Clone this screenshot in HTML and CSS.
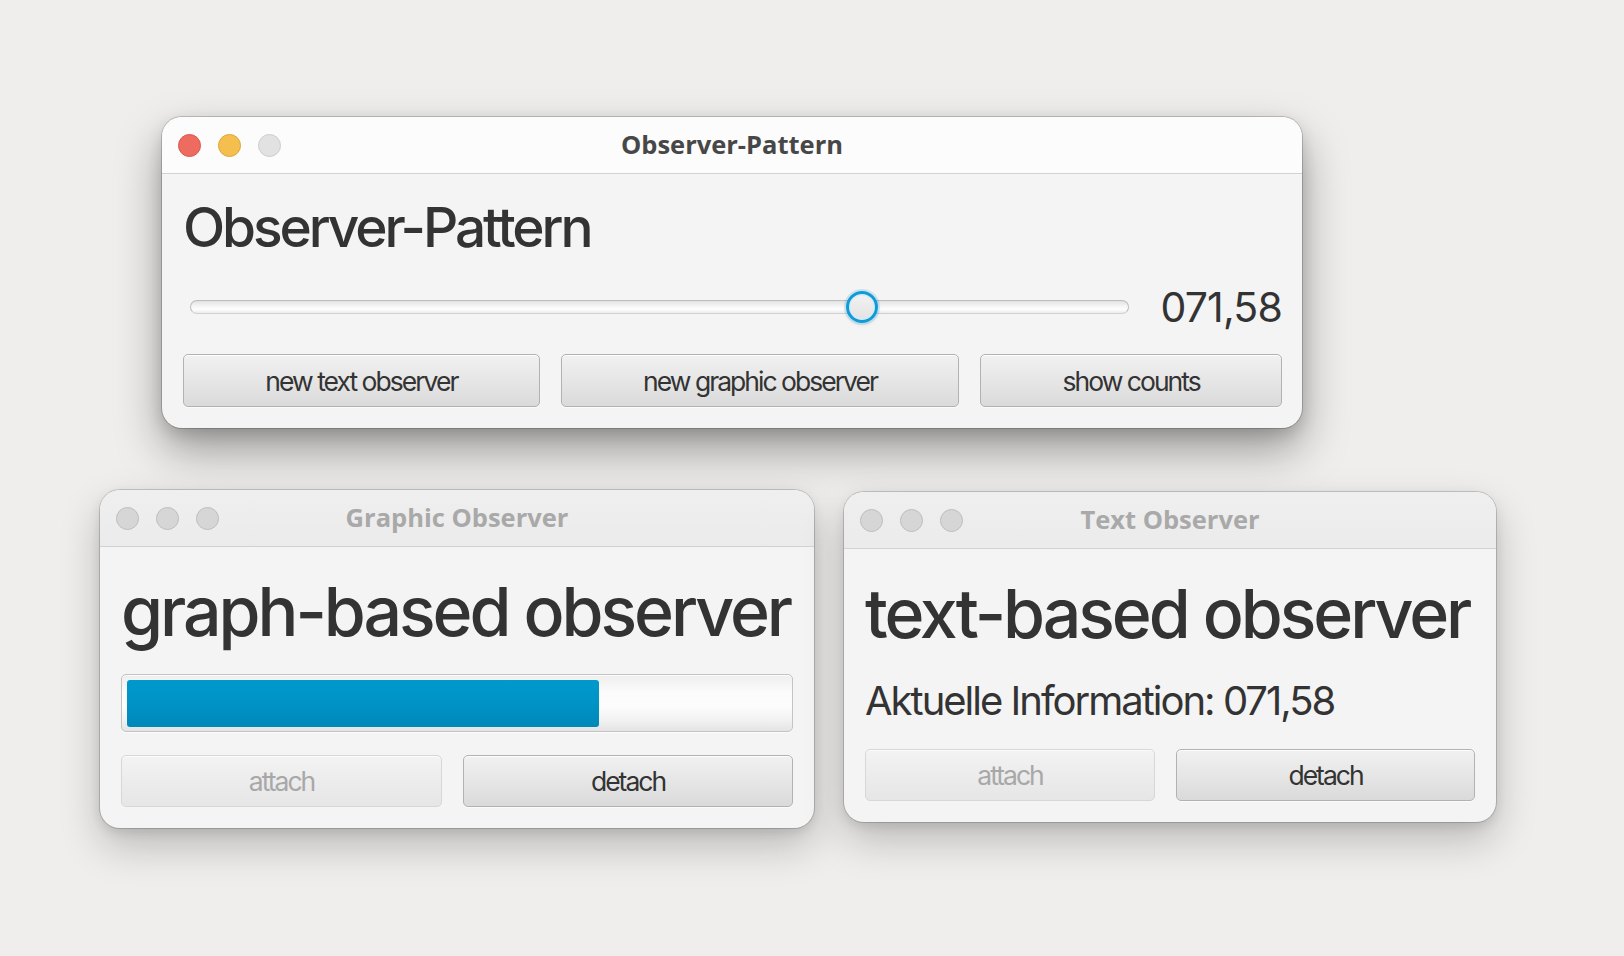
FILE: index.html
```html
<!DOCTYPE html>
<html lang="de">
<head>
<meta charset="utf-8">
<title>Observer-Pattern</title>
<link rel="stylesheet" href="styles.css">
</head>
<body>
<div class="desk">

  <section class="window win-main active">
    <header class="titlebar">
      <div class="lights">
        <span class="light red"></span>
        <span class="light yellow"></span>
        <span class="light zoom"></span>
      </div>
      <div class="wtitle">Observer-Pattern</div>
      <div></div>
    </header>
    <div class="content main-content">
      <h1 class="heading">Observer-Pattern</h1>
      <div class="slider-row">
        <div class="slider">
          <div class="track">
            <div class="thumb" style="left: 71.58%"></div>
          </div>
        </div>
        <div class="value">071,58</div>
      </div>
      <div class="btn-row">
        <button class="btn">new text observer</button>
        <button class="btn">new graphic observer</button>
        <button class="btn">show counts</button>
      </div>
    </div>
  </section>

  <section class="window win-graphic">
    <header class="titlebar">
      <div class="lights">
        <span class="light"></span>
        <span class="light"></span>
        <span class="light"></span>
      </div>
      <div class="wtitle">Graphic Observer</div>
      <div></div>
    </header>
    <div class="content">
      <div class="big">graph-based observer</div>
      <div class="progress">
        <div class="bar" style="width: 71.58%"></div>
      </div>
      <div class="btn-row small-gap">
        <button class="btn" disabled>attach</button>
        <button class="btn">detach</button>
      </div>
    </div>
  </section>

  <section class="window win-text">
    <header class="titlebar">
      <div class="lights">
        <span class="light"></span>
        <span class="light"></span>
        <span class="light"></span>
      </div>
      <div class="wtitle">Text Observer</div>
      <div></div>
    </header>
    <div class="content">
      <div class="big">text-based observer</div>
      <div class="info">Aktuelle Information: 071,58</div>
      <div class="btn-row info-gap">
        <button class="btn" disabled>attach</button>
        <button class="btn">detach</button>
      </div>
    </div>
  </section>

</div>
</body>
</html>
```

FILE: styles.css
```css
* { box-sizing: border-box; }

html, body {
  margin: 0;
  padding: 0;
}

body {
  background: #efeeec;
  font-family: "Inter", "Liberation Sans", sans-serif;
  color: #333333;
}

.desk {
  position: relative;
  width: 1624px;
  height: 956px;
  overflow: hidden;
  background: #efeeec;
}

/* ---------- windows ---------- */
.window {
  position: absolute;
  background: #f4f4f4;
  border-radius: 20px;
  overflow: hidden;
  box-shadow:
    0 0 0 1px rgba(0, 0, 0, 0.16),
    0 18px 40px rgba(0, 0, 0, 0.22),
    0 4px 12px rgba(0, 0, 0, 0.10);
}

.win-main {
  left: 162px;
  top: 117px;
  width: 1140px;
  box-shadow:
    0 0 0 1px rgba(0, 0, 0, 0.18),
    0 22px 46px rgba(0, 0, 0, 0.36),
    0 6px 16px rgba(0, 0, 0, 0.14);
}

.win-graphic {
  left: 100px;
  top: 490px;
  width: 714px;
}

.win-text {
  left: 844px;
  top: 492px;
  width: 652px;
}

/* ---------- title bar ---------- */
.titlebar {
  height: 57px;
  display: grid;
  grid-template-columns: 1fr auto 1fr;
  align-items: center;
  background: linear-gradient(#efefef, #ebebeb);
  border-bottom: 1px solid #d2d2d2;
}

.active .titlebar {
  background: #fcfcfc;
}

.lights {
  display: flex;
  gap: 17px;
  padding-left: 16px;
}

.light {
  width: 23px;
  height: 23px;
  border-radius: 50%;
  background: #d6d6d6;
  border: 1px solid #bdbdbd;
}

.light.red {
  background: #ee6b60;
  border-color: #d8574c;
}

.light.yellow {
  background: #f5bf4f;
  border-color: #dca43a;
}

.light.zoom {
  background: #e2e2e2;
  border-color: #cdcdcd;
}

.wtitle {
  font-family: "Open Sans", "DejaVu Sans", sans-serif;
  font-weight: 700;
  font-size: 25.5px;
  color: #a9a9a9;
  white-space: nowrap;
  line-height: 30px;
  padding-bottom: 3px;
}

.active .wtitle {
  color: #474747;
}

/* ---------- content ---------- */
.content {
  display: flex;
  flex-direction: column;
  padding: 23px 21px 21px 21px;
}

.main-content {
  padding: 20px 20px 21px 21px;
}

.heading {
  margin: 0;
  font-weight: 450;
  font-size: 55px;
  line-height: 66px;
  letter-spacing: -0.056em;
  color: #333;
}

.big {
  font-weight: 450;
  font-size: 68px;
  line-height: 82px;
  letter-spacing: -0.045em;
  white-space: nowrap;
  color: #333;
}

.info {
  margin-top: 23px;
  font-size: 40px;
  line-height: 48px;
  letter-spacing: -0.05em;
  white-space: nowrap;
  color: #333;
}

/* ---------- slider ---------- */
.slider-row {
  margin-top: 22px;
  height: 50px;
  display: flex;
  align-items: center;
  gap: 24px;
}

.slider {
  flex: 1;
  padding: 0 7px;
  height: 50px;
  display: flex;
  align-items: center;
}

.track {
  position: relative;
  flex: 1;
  height: 14px;
  border-radius: 7px;
  border: 1.5px solid #bcbcbc;
  border-bottom-color: #d0d0d0;
  background: linear-gradient(#e2e2e2, #f6f6f6 45%, #fdfdfd 70%, #ececec);
}

.thumb {
  position: absolute;
  top: 50%;
  width: 32px;
  height: 32px;
  transform: translate(-50%, -50%);
  border-radius: 50%;
  border: 3px solid #0f9bd7;
  background: linear-gradient(#f2f2f2, #e3e3e3);
  box-shadow:
    inset 0 0 0 1.5px #d4ebf6,
    0 0 0 2px rgba(15, 155, 215, 0.18),
    0 2px 4px rgba(0, 0, 0, 0.08);
}

.value {
  font-size: 41px;
  line-height: 50px;
  letter-spacing: -0.02em;
  white-space: nowrap;
  color: #333;
}

/* ---------- progress ---------- */
.progress {
  margin-top: 22px;
  height: 58px;
  border: 1.5px solid #c3c3c3;
  border-radius: 5px;
  padding: 4.5px 5px;
  background: linear-gradient(#eeeeee, #fbfbfb 30%, #fdfdfd 55%, #f2f2f2 80%, #e4e4e4);
  box-shadow: inset 0 1px 0 rgba(255,255,255,0.8), 0 1px 0 rgba(255,255,255,0.7);
}

.bar {
  height: 100%;
  border-radius: 3px;
  background: linear-gradient(#0099cc, #0093c6 50%, #0088b8);
}

/* ---------- buttons ---------- */
.btn-row {
  margin-top: 22px;
  display: flex;
  gap: 21px;
}

.btn-row.small-gap {
  margin-top: 23px;
}

.btn-row.info-gap {
  margin-top: 24px;
}

.btn {
  flex: 1 1 auto;
  height: 52px;
  padding: 0;
  margin: 0;
  font-family: "Inter", "Liberation Sans", sans-serif;
  font-size: 26.5px;
  letter-spacing: -0.075em;
  color: #333;
  border: 1.5px solid #b2b2b2;
  border-radius: 5px;
  background: linear-gradient(#f1f1f1, #e6e6e6 50%, #dadada);
  box-shadow: inset 0 1px 0 rgba(255, 255, 255, 0.9), 0 1px 0 rgba(255, 255, 255, 0.6);
  white-space: nowrap;
}

.main-content .btn {
  height: 53px;
}

.btn:disabled {
  color: #a8a8a8;
  border-color: #d7d7d7;
  background: linear-gradient(#f3f3f3, #ececec 50%, #e6e6e6);
  box-shadow: inset 0 1px 0 rgba(255, 255, 255, 0.7);
}
```
